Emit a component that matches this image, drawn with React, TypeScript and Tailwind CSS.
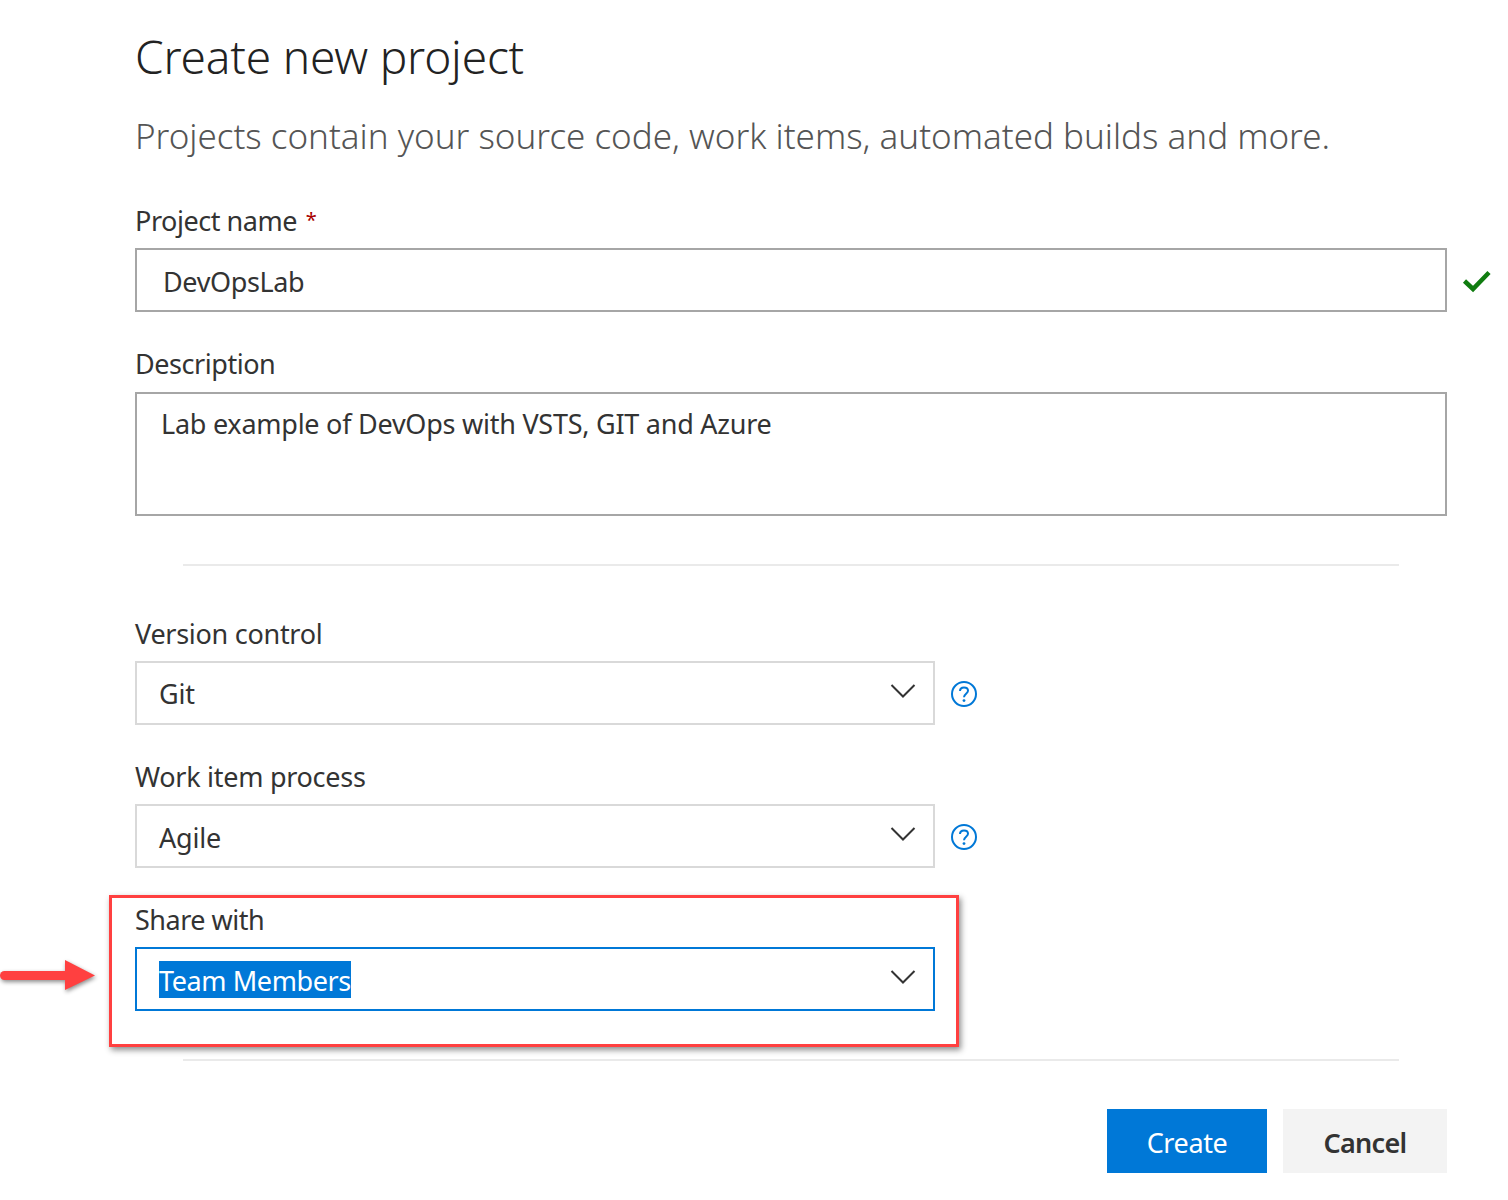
import React from "react";

function Label({ children, className = "" }: { children: React.ReactNode; className?: string }) {
  return <div className={"h-[28px] leading-[28px] text-[27px] text-[#333333] whitespace-nowrap " + className}>{children}</div>;
}
function Chevron() {
  return (
    <svg width="26" height="16" viewBox="0 0 26 16" fill="none" className="mr-[17px] -mt-[4px] shrink-0">
      <path d="M1.5 2 L13 13.5 L24.5 2" stroke="#333333" strokeWidth="2" />
    </svg>
  );
}
function Help() {
  return (
    <svg width="28" height="28" viewBox="0 0 28 28" fill="none" className="ml-[15px] mt-[1px] shrink-0">
      <circle cx="14" cy="14" r="12" stroke="#0078d7" strokeWidth="2" />
      <path d="M10 11 C10 8.6 11.8 7.4 14 7.4 C16.4 7.4 18 8.8 18 10.8 C18 13.6 14 14 14 17.2" stroke="#0078d7" strokeWidth="2" fill="none" />
      <circle cx="14" cy="20.6" r="1.4" fill="#0078d7" />
    </svg>
  );
}
function Select({ value, textClass }: { value: string; textClass: string }) {
  return (
    <div className="flex items-center">
      <div className="w-[800px] h-[64px] border-2 border-[#d9d9d9] flex items-center justify-between pl-[22px] text-[27px] tracking-[-0.2px] text-[#333333]">
        <span className={textClass}>{value}</span>
        <Chevron />
      </div>
      <Help />
    </div>
  );
}

export default function App() {
  return (
    <div className="relative w-[1508px] h-[1200px] bg-white pl-[135px] overflow-hidden" style={{ fontFamily: '"Noto Sans", sans-serif' }}>
      <h1 className="pt-[25px] h-[90px] text-[46px] leading-[62px] font-light tracking-[-0.17px] text-[#222222] whitespace-nowrap">Create new project</h1>
      <p className="mt-[22px] h-[48px] text-[35px] leading-[48px] font-light tracking-[-0.01px] text-[#555555] whitespace-nowrap">Projects contain your source code, work items, automated builds and more.</p>

      <Label className="mt-[46px] tracking-[-0.45px]">
        Project name <span className="text-[#a80000] align-[4px] text-[20px] ml-[2px]">*</span>
      </Label>
      <div className="mt-[14px] flex items-center">
        <div className="w-[1312px] h-[64px] border-2 border-[#a6a6a6] flex items-center pl-[26px] pt-[4px] text-[27px] tracking-[-0.38px] text-[#333333]">DevOpsLab</div>
        <svg width="30" height="24" viewBox="0 0 30 24" fill="none" className="ml-[15px] mt-[1px]">
          <path d="M2.5 12 L11 20 L27 3.5" stroke="#107c10" strokeWidth="4.5" />
        </svg>
      </div>

      <Label className="mt-[38px] tracking-[-0.45px]">Description</Label>
      <div className="mt-[14px] w-[1312px] h-[124px] border-2 border-[#a6a6a6] pl-[24px] pt-[14px] text-[27px] leading-[32px] tracking-[-0.25px] text-[#333333]">Lab example of DevOps with VSTS, GIT and Azure</div>

      <div className="mt-[48px] ml-[48px] w-[1216px] h-[2px] bg-[#eaeaea]" />

      <Label className="mt-[54px] tracking-[-0.28px]">Version control</Label>
      <div className="mt-[13px]"><Select value="Git" textClass="pt-[3px]" /></div>
      <Label className="mt-[38px] tracking-[-0.28px]">Work item process</Label>
      <div className="mt-[13px]"><Select value="Agile" textClass="pt-[4px]" /></div>
      <Label className="mt-[38px] tracking-[-0.5px]">Share with</Label>
      <div className="mt-[13px] w-[800px] h-[64px] border-2 border-[#0078d7] flex items-center justify-between pl-[22px] text-[27px] tracking-[-0.4px]">
        <span className="bg-[#0078d7] text-white h-[37px] leading-[39px]">Team Members</span>
        <Chevron />
      </div>

      <div className="mt-[48px] ml-[48px] w-[1216px] h-[2px] bg-[#eaeaea]" />

      <div className="mt-[48px] w-[1312px] flex justify-end gap-[16px] text-[27px] tracking-[-0.4px]">
        <button className="w-[160px] h-[64px] bg-[#0078d7] text-white pt-[4px]">Create</button>
        <button className="w-[164px] h-[64px] bg-[#f3f3f3] text-[#333333] font-semibold tracking-[-0.7px] pt-[4px]">Cancel</button>
      </div>

      {/* callout annotation */}
      <div className="absolute left-[109px] top-[895px] w-[850px] h-[152px] border-[3px] border-[#ff4040] shadow-[2px_3px_6px_rgba(0,0,0,0.45)] pointer-events-none" />
      <svg width="100" height="44" viewBox="0 0 100 44" className="absolute left-0 top-[956px]" style={{ filter: "drop-shadow(1px 2px 2px rgba(0,0,0,0.45))" }}>
        <path d="M4.5 19.5 L66 19.5" stroke="#ff4040" strokeWidth="9" strokeLinecap="round" />
        <path d="M65 4 L95 19.5 L65 34 Z" fill="#ff4040" />
      </svg>
    </div>
  );
}
